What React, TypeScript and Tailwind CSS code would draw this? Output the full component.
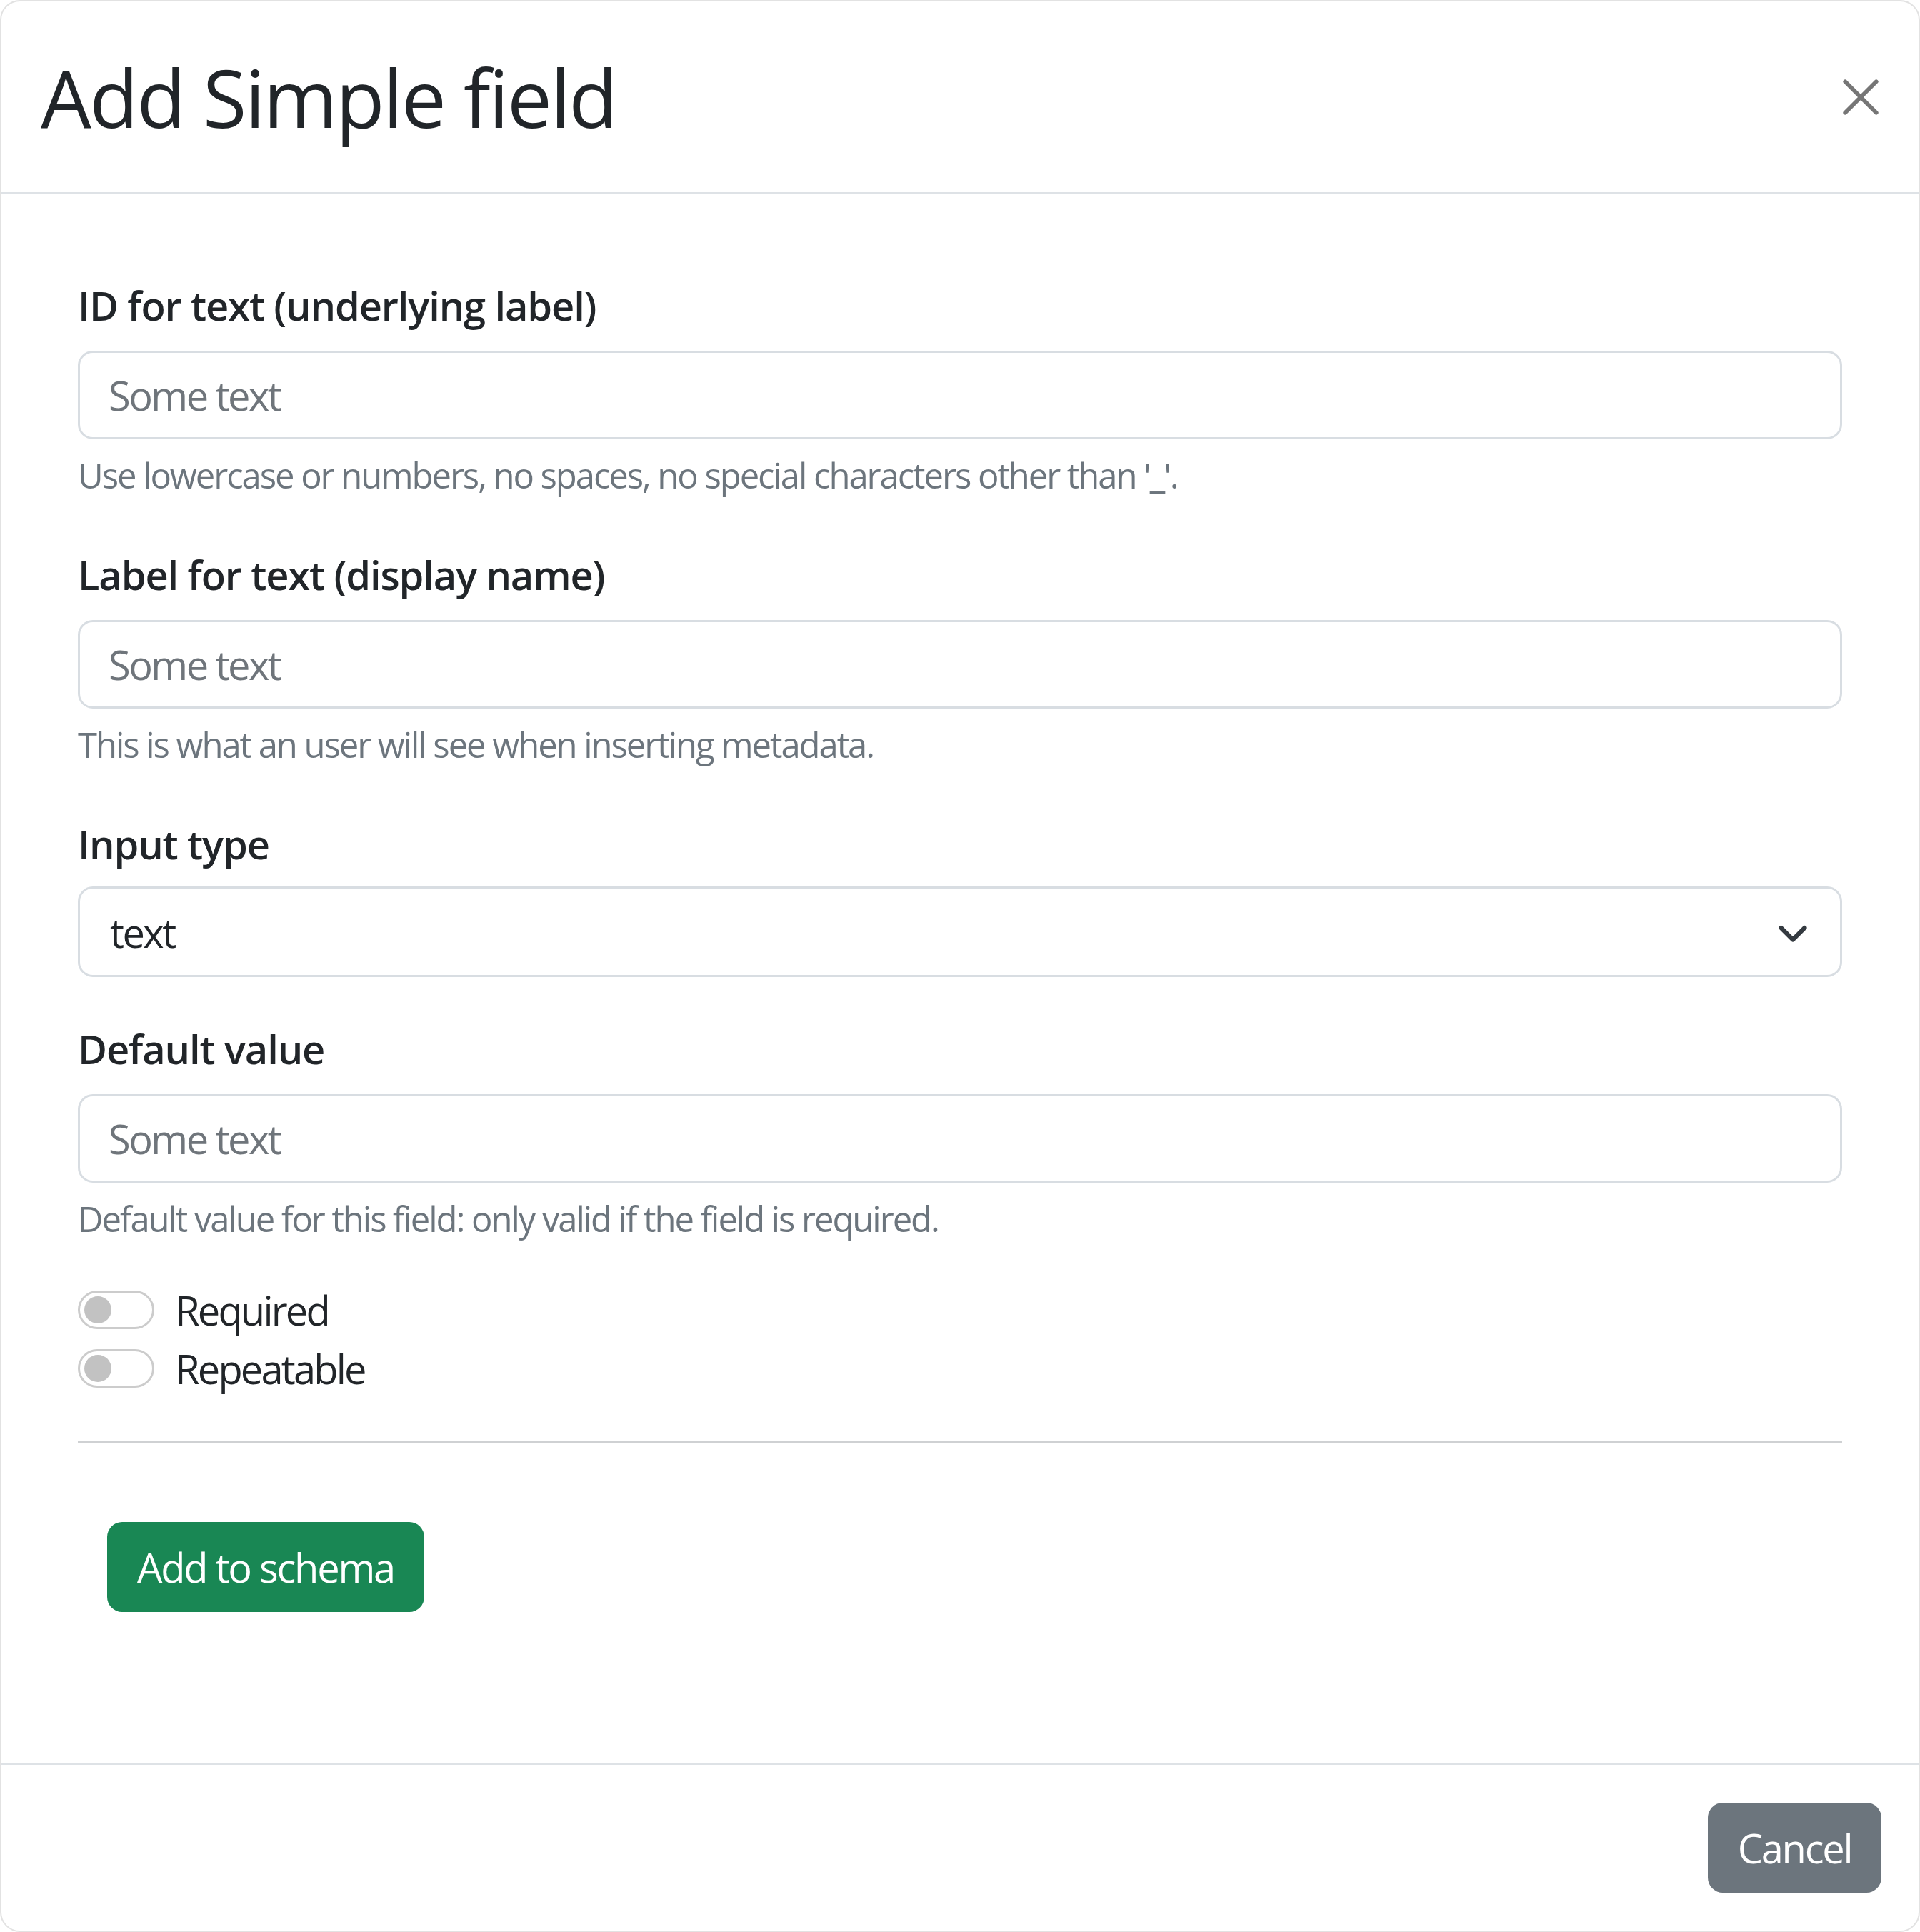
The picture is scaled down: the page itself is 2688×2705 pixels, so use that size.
import React from "react";

function Label({ children }: { children: React.ReactNode }) {
  return (
    <div className="h-[84px] leading-[84px] text-[56px] font-semibold text-[#212529] mb-[22px] tracking-[-0.02em]">
      {children}
    </div>
  );
}

function TextInput() {
  return (
    <div className="h-[124px] border-[3px] border-[#d8dde2] rounded-[21px] pl-[40px] pr-[42px] flex items-center text-[56px] text-[#6f757b] tracking-[-0.045em]">
      Some text
    </div>
  );
}

function Help({ children }: { children: React.ReactNode }) {
  return (
    <div className="mt-[14px] h-[73px] leading-[73px] text-[49px] text-[#6c757d] tracking-[-0.042em]">{children}</div>
  );
}

function Switch({ label }: { label: string }) {
  return (
    <div className="flex items-center h-[82px]">
      <div className="w-[107px] h-[54px] rounded-full border-[3px] border-[#cccccc] flex items-center pl-[6px]">
        <div className="w-[38px] h-[38px] rounded-full bg-[#c2c2c2]" />
      </div>
      <span className="ml-[29px] text-[56px] text-[#212529] tracking-[-0.05em]">{label}</span>
    </div>
  );
}

export default function App() {
  return (
    <div className="w-[2688px] h-[2705px] bg-white font-['Open_Sans',sans-serif]">
      <div className="w-full h-full flex flex-col border-2 border-[#e2e2e2] rounded-[28px] overflow-hidden">
        {/* Header */}
        <div className="h-[270px] shrink-0 border-b-[3px] border-[#dee2e6] flex items-center justify-between pl-[55px] pr-[52px]">
          <h1 className="text-[112px] font-medium text-[#212529] leading-none tracking-[-0.022em]">Add Simple field</h1>
          <svg width="58" height="58" viewBox="0 0 16 16" className="text-[#767676]">
            <path d="M2 2 L14 14 M14 2 L2 14" stroke="currentColor" strokeWidth="1.6" strokeLinecap="round" fill="none" />
          </svg>
        </div>

        {/* Body */}
        <div className="flex-1 px-[107px] pt-[113px]">
          <Label>ID for text (underlying label)</Label>
          <TextInput />
          <Help>Use lowercase or numbers, no spaces, no special characters other than '_'.</Help>

          <div className="mt-[60px]">
            <Label>Label for text (display name)</Label>
            <TextInput />
            <Help>This is what an user will see when inserting metadata.</Help>
          </div>

          <div className="mt-[60px]">
            <Label>Input type</Label>
            <div className="-mt-[4px] h-[127px] border-[3px] border-[#d8dde2] rounded-[21px] pl-[42px] pr-[44px] flex items-center justify-between text-[56px] text-[#212529]">
              <span className="tracking-[-0.045em]">text</span>
              <svg width="44" height="33" viewBox="0 0 16 12">
                <path d="m2 4 6 6 6-6" fill="none" stroke="#343a40" strokeWidth="2.2" strokeLinecap="round" strokeLinejoin="round" />
              </svg>
            </div>
          </div>

          <div className="mt-[58px]">
            <Label>Default value</Label>
            <TextInput />
            <Help>Default value for this field: only valid if the field is required.</Help>
          </div>

          <div className="mt-[50px]">
            <Switch label="Required" />
            <Switch label="Repeatable" />
          </div>

          <div className="mt-[60px] border-t-[3px] border-[#cfd1d3]" />

          <button className="mt-[111px] ml-[41px] w-[444px] h-[126px] bg-[#198754] rounded-[21px] text-white text-[56px] tracking-[-0.04em]">
            Add to schema
          </button>
        </div>

        {/* Footer */}
        <div className="h-[235px] shrink-0 border-t-[3px] border-[#dee2e6] flex items-center justify-end pr-[52px]">
          <button className="w-[243px] h-[126px] bg-[#6c757d] rounded-[21px] text-white text-[56px] tracking-[-0.04em]">Cancel</button>
        </div>
      </div>
    </div>
  );
}
